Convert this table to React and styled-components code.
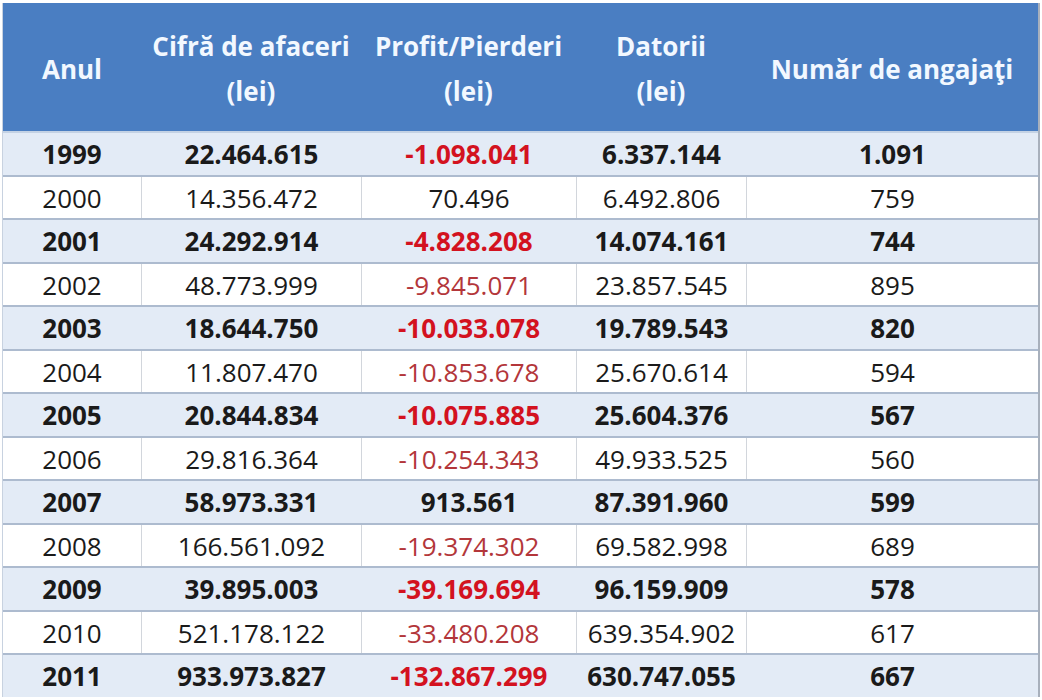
import React from 'react';
import styled, { createGlobalStyle } from 'styled-components';

const GlobalStyle = createGlobalStyle`
  html, body {
    margin: 0;
    padding: 0;
    background: #ffffff;
  }
`;

const COLS = '138px 220px 215px 170px 292px';

const Page = styled.div`
  padding: 3px 0 0 2px;
  width: 1040px;
  font-family: "Open Sans", "Liberation Sans", sans-serif;
`;

const Table = styled.div`
  width: 1035px;
  border-right: 2px solid #a8b0bc;
  border-left: 1px solid #c8d2e0;
`;

const HeadRow = styled.div`
  display: grid;
  grid-template-columns: ${COLS};
  height: 128px;
  background: #4a7ec2;
  color: #f2f8ff;
  font-weight: 700;
  font-size: 26px;
  line-height: 45px;
`;

const HeadCell = styled.div`
  display: flex;
  flex-direction: column;
  align-items: center;
  justify-content: center;
  text-align: center;
  padding-top: 4px;
`;

const Row = styled.div`
  display: grid;
  grid-template-columns: ${COLS};
  height: 43.5px;
  box-sizing: border-box;
  border-top: 2px solid ${p => (p.$first ? '#c4d2e4' : '#adbbcf')};
  background: ${p => (p.$shaded ? '#e3ebf6' : '#ffffff')};
  font-weight: ${p => (p.$shaded ? 700 : 400)};
  font-size: 26px;
  color: #1a1a1a;
`;

const Cell = styled.div`
  display: flex;
  align-items: center;
  justify-content: center;
  padding-top: 1px;
  border-left: 1px solid ${p => (p.$divider ? '#d2d6dc' : 'transparent')};
  color: ${p => (p.$neg ? (p.$bold ? '#d3121f' : '#b3363a') : 'inherit')};
  &:first-child {
    border-left: none;
  }
`;

const rows = [
  ['1999', '22.464.615', '-1.098.041', '6.337.144', '1.091'],
  ['2000', '14.356.472', '70.496', '6.492.806', '759'],
  ['2001', '24.292.914', '-4.828.208', '14.074.161', '744'],
  ['2002', '48.773.999', '-9.845.071', '23.857.545', '895'],
  ['2003', '18.644.750', '-10.033.078', '19.789.543', '820'],
  ['2004', '11.807.470', '-10.853.678', '25.670.614', '594'],
  ['2005', '20.844.834', '-10.075.885', '25.604.376', '567'],
  ['2006', '29.816.364', '-10.254.343', '49.933.525', '560'],
  ['2007', '58.973.331', '913.561', '87.391.960', '599'],
  ['2008', '166.561.092', '-19.374.302', '69.582.998', '689'],
  ['2009', '39.895.003', '-39.169.694', '96.159.909', '578'],
  ['2010', '521.178.122', '-33.480.208', '639.354.902', '617'],
  ['2011', '933.973.827', '-132.867.299', '630.747.055', '667'],
];

const App = () => {
  return (
    <Page>
      <GlobalStyle />
      <Table>
        <HeadRow>
          <HeadCell>Anul</HeadCell>
          <HeadCell>
            <span>Cifră de afaceri</span>
            <span>(lei)</span>
          </HeadCell>
          <HeadCell>
            <span>Profit/Pierderi</span>
            <span>(lei)</span>
          </HeadCell>
          <HeadCell>
            <span>Datorii</span>
            <span>(lei)</span>
          </HeadCell>
          <HeadCell>Număr de angajaţi</HeadCell>
        </HeadRow>
        {rows.map((r, i) => {
          const shaded = i % 2 === 0;
          return (
            <Row key={r[0]} $shaded={shaded} $first={i === 0}>
              {r.map((v, j) => (
                <Cell
                  key={j}
                  $divider={!shaded}
                  $neg={v.startsWith('-')}
                  $bold={shaded}
                >
                  {v}
                </Cell>
              ))}
            </Row>
          );
        })}
      </Table>
    </Page>
  );
};

export default App;
